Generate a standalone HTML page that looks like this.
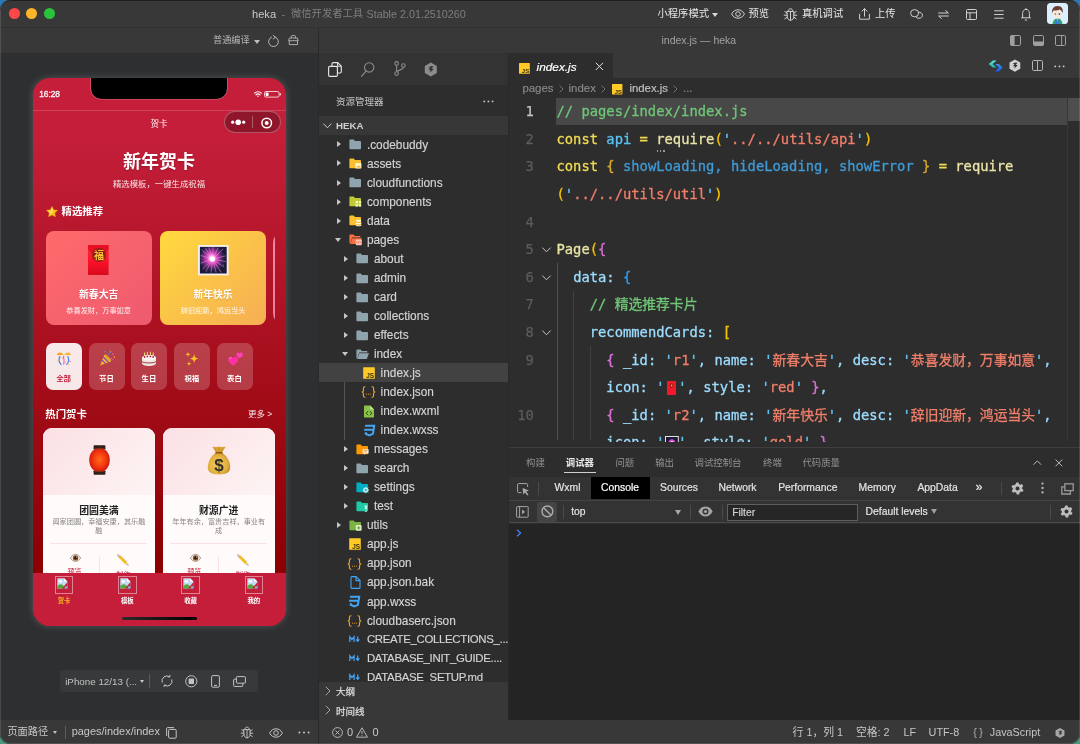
<!DOCTYPE html>
<html lang="zh-CN">
<head>
<meta charset="utf-8">
<title>heka - 微信开发者工具</title>
<style>
*{box-sizing:border-box;margin:0;padding:0}
html,body{width:1080px;height:744px;overflow:hidden}
body{background:linear-gradient(180deg,#2a7ab8 0%,#2a7ab8 30%,#4a9a7a 100%);font-family:"Liberation Sans","Noto Sans CJK SC",sans-serif;color:#ccc;font-size:12px;-webkit-font-smoothing:antialiased}
.abs{position:absolute}
#win{position:absolute;left:0;top:0;width:1080px;height:744px;background:#2e2f31;border-radius:10px;overflow:hidden;will-change:transform}
#titlebar{position:absolute;left:0;top:0;width:1080px;height:27px;background:#383838}
#tb2{position:absolute;left:0;top:28px;width:1080px;height:25px;background:#383838}
.tl{position:absolute;top:8.2px;width:11px;height:11px;border-radius:50%}
.t{position:absolute;white-space:nowrap;line-height:1}
svg{position:absolute;overflow:visible}
/* simulator */
#sim{position:absolute;left:0;top:53px;width:318px;height:667px;background:#2e2f31}
#simbar{position:absolute;left:0;top:720px;width:318px;height:24px;background:#383838}
#vsep{position:absolute;left:318px;top:28px;width:1px;height:716px;background:#2a2a2a}
/* explorer */
#exp{position:absolute;left:319px;top:53px;width:189px;height:667px;background:#2d2d2d}
/* editor */
#ed{position:absolute;left:508px;top:53px;width:572px;height:667px;background:#2d2d2d}
#status{position:absolute;left:319px;top:720px;width:761px;height:24px;background:#383838}

/* phone */
#phone{position:absolute;left:32.5px;top:25.3px;width:253px;height:547.3px;border-radius:17px;background:#c41e3a;overflow:hidden}
#phsh{position:absolute;left:32.5px;top:25.3px;width:253px;height:547.3px;border-radius:17px;box-shadow:0 0 7px 0 rgba(255,255,255,.2)}
#page{position:absolute;left:0;top:58.5px;width:253px;height:436px;background:linear-gradient(180deg,#c41e3a 0%,#8b0000 100%)}
.w{color:#fff}
.b{font-weight:bold}
.c{text-align:center}
.rc{position:absolute;top:93.8px;width:106.4px;height:94.2px;border-radius:8px}
.chip{position:absolute;top:206.3px;width:36.2px;height:46.8px;border-radius:7px;background:rgba(255,255,255,.2)}
.chip .t{left:0;width:35.8px;text-align:center;top:31.5px;font-size:7.4px;font-weight:bold;color:#fff}
.hc{position:absolute;top:291px;width:111.6px;height:160px;border-radius:9px;background:#fffbfb;overflow:hidden}
.hc .top{position:absolute;left:0;top:0;width:100%;height:67px;background:linear-gradient(135deg,#fbe0e4 0%,#fdf4f4 100%)}
.tab{position:absolute;top:494.3px;width:63.25px;height:53px}
.tab .bx{position:absolute;left:22.4px;top:3.2px;width:18.4px;height:18.4px;border:1px solid rgba(255,255,255,.45)}
.tab .t{left:0;width:63.25px;text-align:center;top:25.3px;font-size:6.4px;font-weight:bold;color:#fff}

.fn{font-size:11.85px;color:#d4d4d4;margin-top:1.6px;-webkit-text-stroke:.15px}
.bc{-webkit-text-stroke:.15px}

.cd{font-family:"DejaVu Sans Mono","Noto Sans CJK SC",monospace;font-size:13.8px;line-height:27.6px;white-space:pre;color:#d4d4d4;margin-top:.6px;-webkit-text-stroke:.3px}
.ln{font-family:"DejaVu Sans Mono",monospace;font-size:13.8px;line-height:27.6px;text-align:right;margin-top:.6px;-webkit-text-stroke:.25px}
#codeclip{position:absolute;left:0;top:0;width:572px;height:388.8px;overflow:hidden}
.pt{position:absolute;white-space:nowrap;line-height:1;font-size:9.4px;color:#929292;top:405.1px}
.dt{position:absolute;white-space:nowrap;line-height:1;font-size:10.35px;color:#e2e2e2;top:430.4px;-webkit-text-stroke:.2px}
.sb{position:absolute;white-space:nowrap;line-height:1;font-size:10.8px;color:#c6c6c6;top:6.5px}
</style>
</head>
<body>
<div id="win">
  <div id="titlebar">
    <div class="tl" style="left:9.2px;background:#fe4848"></div>
    <div class="tl" style="left:26.4px;background:#fdb426"></div>
    <div class="tl" style="left:43.7px;background:#2ac33b"></div>
    <div class="t" id="ttl" style="left:252px;top:8.8px;font-size:11.1px;color:#c9c9c9">heka</div>
    <div class="t" style="left:281.6px;top:8.8px;font-size:11px;color:#7e7e7e">-</div>
    <div class="t" id="ttl2" style="left:291px;top:9.3px;font-size:10.3px;color:#7e7e7e">微信开发者工具</div>
    <div class="t" id="ttl3" style="left:366.5px;top:8.8px;font-size:10.75px;color:#7e7e7e">Stable 2.01.2510260</div>
    <div class="t" id="mode" style="left:657.5px;top:9.4px;font-size:10.3px;color:#e6e6e6">小程序模式</div>
    <div class="abs" style="left:712px;top:12.6px;border:3px solid transparent;border-top:4px solid #d8d8d8;border-bottom:0"></div>
    <svg style="left:731px;top:9px" width="14" height="10" viewBox="0 0 14 10" fill="none" stroke="#d0d0d0" stroke-width="1"><path d="M0.6 5C2.2 2 4.4 0.8 7 0.8S11.8 2 13.4 5C11.8 8 9.6 9.2 7 9.2S2.2 8 0.6 5Z"/><circle cx="7" cy="5" r="2.3"/></svg>
    <div class="t" id="pv" style="left:748.5px;top:9.4px;font-size:10.3px;color:#e6e6e6">预览</div>
    <svg style="left:783px;top:7.5px" width="15" height="13" viewBox="0 0 15 13" fill="none" stroke="#d0d0d0" stroke-width="1" stroke-linecap="round"><path d="M5.2 3.4C5.2 1.6 6.2 0.8 7.5 0.8S9.8 1.6 9.8 3.4"/><path d="M4.2 3.4H10.8V8.6C10.8 10.6 9.4 12.2 7.5 12.2S4.2 10.6 4.2 8.6Z"/><path d="M7.5 3.4V12.2"/><path d="M4.2 5.2L1.8 3.6M4.2 7.2H1.2M4.2 9.2L1.8 10.8M10.8 5.2L13.2 3.6M10.8 7.2H13.8M10.8 9.2L13.2 10.8"/></svg>
    <div class="t" id="dbg" style="left:802px;top:9.4px;font-size:10.3px;color:#e6e6e6">真机调试</div>
    <svg style="left:858.5px;top:8px" width="11" height="12" viewBox="0 0 11 12" fill="none" stroke="#d0d0d0" stroke-width="1" stroke-linecap="round" stroke-linejoin="round"><path d="M0.6 6.2V11.2H10.4V6.2"/><path d="M5.5 8.2V0.8M2.9 3.2L5.5 0.7L8.1 3.2"/></svg>
    <div class="t" id="up" style="left:875px;top:9.4px;font-size:10.3px;color:#e6e6e6">上传</div>
    <svg style="left:909.5px;top:9px" width="13" height="10" viewBox="0 0 13 10" fill="none" stroke="#d0d0d0" stroke-width="1"><ellipse cx="4.6" cy="4.2" rx="4" ry="3.6"/><path d="M8 3.4C10.4 2.8 12.4 4.2 12.4 6.2C12.4 8 11 9.3 9 9.3C7.4 9.3 6.2 8.6 5.6 7.6"/></svg>
    <svg style="left:938px;top:9.5px" width="11" height="9" viewBox="0 0 11 9" fill="none" stroke="#d0d0d0" stroke-width="1" stroke-linecap="round" stroke-linejoin="round"><path d="M0.6 3H10.4L7.6 0.6M10.4 6H0.6L3.4 8.4"/></svg>
    <svg style="left:965.5px;top:8.5px" width="11" height="11" viewBox="0 0 11 11" fill="none" stroke="#d0d0d0" stroke-width="1"><rect x="0.5" y="0.5" width="10" height="10" rx="1"/><path d="M0.5 3.8H10.5M4 3.8V10.5"/></svg>
    <svg style="left:994px;top:9.5px" width="10" height="9" viewBox="0 0 10 9" fill="none" stroke="#d0d0d0" stroke-width="1"><path d="M0.2 0.8H9.6M0.2 4.5H9.6M0.2 8.2H9.6"/></svg>
    <svg style="left:1021px;top:7.5px" width="10" height="13" viewBox="0 0 10 13" fill="none" stroke="#d0d0d0" stroke-width="1" stroke-linecap="round"><path d="M1.6 9.6V5.4C1.6 3 3 1.4 5 1.4S8.4 3 8.4 5.4V9.6"/><path d="M0.5 9.8H9.5M4.2 12H5.8M5 0.6V1.2"/></svg>
    <div class="abs" id="avatar" style="left:1047px;top:3px;width:21px;height:21px;border-radius:3.5px;background:#dcefff;overflow:hidden">
      <svg style="left:0;top:0" width="21" height="21" viewBox="0 0 21 21"><path d="M5.5 21C5.8 17.5 7.5 15.5 10.5 15.5S15.2 17.5 15.5 21Z" fill="#2fae62"/><path d="M7.6 21L8.3 16.2L10.5 17.2L12.7 16.2L13.4 21Z" fill="#3b7fd0"/><path d="M9.8 15.5L10.5 19L11.2 15.5Z" fill="#e4b23a"/><ellipse cx="10.4" cy="10.6" rx="4.6" ry="4.9" fill="#fbe9dc"/><path d="M5.2 10.2C4.4 6 6.6 3.2 10.4 3C14.4 2.8 16.6 5.6 15.6 10.2C15 8.4 14.2 7.4 12.8 6.6C10.6 7.8 7.6 7.6 6.4 7.4C5.8 8.2 5.4 9.2 5.2 10.2Z" fill="#6b4030"/><circle cx="8.4" cy="11" r="0.9" fill="#c77a3a"/><circle cx="12.4" cy="11" r="0.9" fill="#3a6fb0"/></svg>
    </div>
  </div>
  <div class="abs" style="left:0;top:27px;width:1080px;height:1px;background:#323232"></div>
  <div id="tb2">
    <div class="t" id="cmp" style="left:213px;top:8.4px;font-size:9.2px;color:#b6b6b6">普通编译</div>
    <div class="abs" style="left:254px;top:11.8px;border:3px solid transparent;border-top:4px solid #bdbdbd;border-bottom:0"></div>
    <svg style="left:267.5px;top:7px" width="11" height="12" viewBox="0 0 11 12" fill="none" stroke="#b8b8b8" stroke-width="1" stroke-linecap="round"><path d="M7.4 2.1A4.9 4.9 0 1 1 3.6 2.1"/><path d="M5.2 0.4L7.5 2.2L5.2 4" stroke-linejoin="round" fill="none"/></svg>
    <svg style="left:288.2px;top:7.1px" width="10.8" height="10.2" viewBox="0 0 12 11" fill="none" stroke="#b8b8b8" stroke-width="1" stroke-linejoin="round"><path d="M3.6 3.2V1.4C3.6 0.9 4 0.5 4.5 0.5H7.5C8 0.5 8.4 0.9 8.4 1.4V3.2"/><path d="M1.6 3.2H10.4L11.4 6.2H0.6Z"/><path d="M1.4 6.2V10.5H10.6V6.2"/></svg>
    <div class="t" id="wt" style="left:661.5px;top:6.6px;font-size:10.5px;color:#a2a2a2">index.js — heka</div>
    <svg style="left:1010px;top:6.5px" width="11" height="11" viewBox="0 0 11 11"><rect x="0.5" y="0.5" width="10" height="10" rx="1.2" fill="none" stroke="#a0a0a0"/><path d="M0.5 1.2C0.5 0.8 0.8 0.5 1.2 0.5H4.6V10.5H1.2C0.8 10.5 0.5 10.2 0.5 9.8Z" fill="#a0a0a0"/></svg>
    <svg style="left:1032.5px;top:6.5px" width="11" height="11" viewBox="0 0 11 11"><rect x="0.5" y="0.5" width="10" height="10" rx="1.2" fill="none" stroke="#a0a0a0"/><path d="M0.5 6.4H10.5V9.8C10.5 10.2 10.2 10.5 9.8 10.5H1.2C0.8 10.5 0.5 10.2 0.5 9.8Z" fill="#a0a0a0"/></svg>
    <svg style="left:1055px;top:6.5px" width="11" height="11" viewBox="0 0 11 11"><rect x="0.5" y="0.5" width="10" height="10" rx="1.2" fill="none" stroke="#a0a0a0"/><path d="M6.6 0.5V10.5" stroke="#a0a0a0" fill="none"/></svg>
  </div>
  <div id="sim">
    <div id="phsh"></div>
    <div id="phone">
      <div class="abs" style="left:58.2px;top:0;width:136.6px;height:21.2px;background:#000;border-radius:0 0 10.5px 10.5px;box-shadow:0 0 0 .6px rgba(255,255,255,.35)"></div>
      <div class="t w" style="left:6.8px;top:12.2px;font-size:8.3px;font-weight:normal;-webkit-text-stroke:.35px;letter-spacing:-.05px;opacity:.95">16:28</div>
      <svg style="left:221.5px;top:13px" width="8" height="6" viewBox="0 0 8 6" fill="none" stroke="#fff" stroke-width="1.1" stroke-linecap="round"><path d="M0.6 2.2C2.6 0.2 5.4 0.2 7.4 2.2M2 3.8C3.2 2.6 4.8 2.6 6 3.8"/><circle cx="4" cy="5.2" r=".7" fill="#fff" stroke="none"/></svg>
      <svg style="left:231.5px;top:12.8px" width="18" height="7" viewBox="0 0 18 7"><rect x=".5" y=".5" width="14.6" height="5.6" rx="1.6" fill="none" stroke="#fff" stroke-opacity=".85" stroke-width=".9"/><rect x="1.6" y="1.6" width="3" height="3.4" rx=".8" fill="#fff"/><path d="M16 2.2C16.8 2.4 16.8 4.2 16 4.4Z" fill="#fff" stroke="#fff" stroke-width=".5"/></svg>
      <div class="abs" style="left:0;top:31.4px;width:253px;height:1px;background:rgba(255,255,255,.16)"></div>
      <div class="t w c" style="left:0;width:253px;top:41.6px;font-size:8.6px;opacity:.95">贺卡</div>
      <div class="abs" style="left:191.2px;top:33.2px;width:57.4px;height:21.8px;border-radius:10.9px;background:rgba(0,0,0,.27);border:.8px solid rgba(255,255,255,.28)"></div>
      <svg style="left:196.6px;top:39.2px" width="18" height="10" viewBox="0 0 18 10" fill="#fff"><circle cx="9.2" cy="5.2" r="2.8"/><circle cx="3.7" cy="5.2" r="1.6"/><circle cx="14.7" cy="5.2" r="1.6"/></svg>
      <div class="abs" style="left:219.8px;top:38.2px;width:.8px;height:11.4px;background:rgba(255,255,255,.3)"></div>
      <svg style="left:228.5px;top:38.3px" width="12" height="12" viewBox="0 0 12 12"><circle cx="5.7" cy="6" r="4.8" fill="none" stroke="#fff" stroke-width="1.5"/><circle cx="5.7" cy="6" r="2" fill="#fff"/></svg>
      <div class="abs" style="left:0;top:58.5px;width:253px;height:1px;background:rgba(255,255,255,.14)"></div>
      <div id="page">
        <div class="t w b c" id="h1" style="left:0;width:253px;top:16px;font-size:18px;text-shadow:0 1px 2px rgba(0,0,0,.2)">新年贺卡</div>
        <div class="t w c" id="sub" style="left:0;width:253px;top:42.8px;font-size:8.4px;opacity:.88">精选模板，一键生成祝福</div>
        <svg style="left:13px;top:69px" width="12" height="11" viewBox="0 0 12 11"><path d="M6 0.3L7.7 3.8L11.6 4.3L8.8 7L9.5 10.8L6 9L2.5 10.8L3.2 7L0.4 4.3L4.3 3.8Z" fill="#fcc21b" stroke="#e9a40e" stroke-width=".4"/><path d="M6 1.6L7.2 4.3L6 7.2L3.4 9.6L3.9 6.8L1.8 4.8L4.8 4.4Z" fill="#ffe36a" opacity=".7"/></svg>
        <div class="t w b" id="s1" style="left:29px;top:70px;font-size:10.4px">精选推荐</div>
        <div class="abs" style="left:12.8px;top:0;width:229.6px;height:200px;overflow:hidden">
          <div class="rc" style="left:.4px;background:linear-gradient(135deg,#ff6b6b 0%,#ee5a6f 100%)"></div>
          <div class="rc" style="left:114.6px;background:linear-gradient(135deg,#ffd93d 0%,#f6ad55 100%)"></div>
          <div class="rc" style="left:227.8px;border-radius:12px;background:linear-gradient(180deg,#f08aa2 0%,#ee7c96 100%)"></div>
        </div>
        <div class="t w b c" style="left:13px;width:106.3px;top:153.6px;font-size:9.8px;text-shadow:0 .5px 1px rgba(0,0,0,.15)">新春大吉</div>
        <div class="t w c" style="left:13px;width:106.3px;top:170px;font-size:7.2px;opacity:.92">恭喜发财，万事如意</div>
        <div class="t w b c" style="left:127.4px;width:106.3px;top:153.6px;font-size:9.8px;text-shadow:0 .5px 1px rgba(0,0,0,.15)">新年快乐</div>
        <div class="t w c" style="left:127.4px;width:106.3px;top:170px;font-size:7.2px;opacity:.92">辞旧迎新，鸿运当头</div>
        <!-- red envelope -->
        <svg style="left:55.8px;top:108.6px" width="21" height="30" viewBox="0 0 21 30"><defs><linearGradient id="gEnv" x1="0" y1="0" x2="0" y2="1"><stop offset="0" stop-color="#ff2a35"/><stop offset=".55" stop-color="#fb1228"/><stop offset="1" stop-color="#d80a1e"/></linearGradient></defs><rect x="0" y="0" width="20.6" height="30" rx=".6" fill="url(#gEnv)"/><path d="M0 0H20.6V4C18 9 13 10 10.3 10S2.6 9 0 4Z" fill="#e80f24"/><circle cx="11" cy="10" r="7" fill="#8a1712"/><circle cx="11" cy="10" r="6.2" fill="none" stroke="#b5391c" stroke-width=".6"/><text x="11" y="13.6" font-size="10" text-anchor="middle" fill="#f3c23a" font-family="'Liberation Sans','Noto Sans CJK SC',sans-serif" font-weight="bold">福</text></svg>
        <!-- fireworks -->
        <svg style="left:165px;top:108.4px" width="31" height="31" viewBox="0 0 31 31"><defs><radialGradient id="gFw" cx=".47" cy=".46" r=".56"><stop offset="0" stop-color="#fff"/><stop offset=".14" stop-color="#ffd6f6"/><stop offset=".3" stop-color="#f04fd0"/><stop offset=".55" stop-color="#a8369e" stop-opacity=".8"/><stop offset=".8" stop-color="#4a2a6c" stop-opacity=".5"/><stop offset="1" stop-color="#1b1a3c" stop-opacity="0"/></radialGradient><clipPath id="cFw"><rect x="1.9" y="1.9" width="26.8" height="26.6"/></clipPath></defs><rect x="0" y="0" width="30.6" height="30.4" fill="#f4f1ec"/><rect x="1.9" y="1.9" width="26.8" height="26.6" fill="#1b1a3c"/><circle cx="14.6" cy="14.2" r="13" fill="url(#gFw)" clip-path="url(#cFw)"/><g stroke="#f7a8e8" stroke-width=".55" stroke-linecap="round" opacity=".85"><path d="M14.6 14.2L4 5M14.6 14.2L25 4M14.6 14.2L27 11M14.6 14.2L26 22M14.6 14.2L18 27M14.6 14.2L8 26M14.6 14.2L3 18M14.6 14.2L11 3M14.6 14.2L20 3M14.6 14.2L3 10.5M14.6 14.2L23 27M14.6 14.2L27.5 16.5M14.6 14.2L5 23.5M14.6 14.2L15 2.6M14.6 14.2L13 27.4M14.6 14.2L7.5 3.5"/></g><g fill="#e8504a"><circle cx="6" cy="24" r=".5"/><circle cx="22" cy="25.5" r=".5"/><circle cx="25.5" cy="20" r=".5"/><circle cx="9" cy="26.4" r=".45"/></g><circle cx="14.4" cy="14" r="2.6" fill="#fff"/><rect x="1.9" y="1.9" width="26.8" height="26.6" fill="none" stroke="#f4f1ec" stroke-width=".01"/></svg>
        <!-- chips -->
        <div class="chip" style="left:13.2px;background:rgba(255,255,255,.91)"><div class="t" style="color:#c41e3a">全部</div>
          <svg style="left:10.4px;top:7.6px" width="16" height="16" viewBox="0 0 16 16" fill="none"><path d="M7.6 3.6C5.4 0.4 1.6 1 0.8 3.8C3.4 4.6 6 4.4 7.6 3.6Z" fill="#f5a623"/><path d="M8.2 3.6C10.4 0.4 14.2 1 15 3.8C12.4 4.6 9.8 4.4 8.2 3.6Z" fill="#f7b733"/><path d="M4 5.4C2.2 8.4 3.2 11.6 5.4 13.8" stroke="#3f7fdc" stroke-width="1.2"/><path d="M7.9 4.8C6.6 7.8 9.4 9.6 7.6 13.4" stroke="#ef5a8c" stroke-width="1.1"/><path d="M11.6 5.4C13.4 8.2 12.6 11.4 10.4 13.8" stroke="#4b8be6" stroke-width="1.2"/><path d="M5.8 6.4L10.2 12.4" stroke="#f3b0c4" stroke-width="1"/><circle cx="2.2" cy="9.6" r=".7" fill="#f5c542"/><circle cx="14" cy="10.4" r=".7" fill="#f06292"/><circle cx="12.8" cy="13.6" r=".6" fill="#f5c542"/></svg></div>
        <div class="chip" style="left:56px"><div class="t">节日</div>
          <svg style="left:10px;top:7.4px" width="17" height="17" viewBox="0 0 17 17" fill="none"><path d="M1 15.6L5.4 4.8L12 11.2Z" fill="#f6c233"/><path d="M3.2 10.2L6.6 13.6M4.4 7.2L9.4 12.2" stroke="#8e44ad" stroke-width="1.3"/><path d="M1 15.6L2.2 12.8L4 14.4Z" fill="#d98e1c"/><ellipse cx="8.7" cy="8" rx="1.5" ry="4.6" transform="rotate(-45 8.7 8)" fill="#e0a92a"/><path d="M8.6 6.6C8.6 4 10.2 2.6 12 2" stroke="#4a90e2" stroke-width="1"/><path d="M10.6 8.6C12.6 8.2 14.2 9.2 15.2 10.4" stroke="#e2559a" stroke-width="1"/><circle cx="14" cy="4" r="1" fill="#e2559a"/><circle cx="6" cy="1.8" r=".8" fill="#4a90e2"/><circle cx="15.4" cy="7" r=".7" fill="#f6c233"/><path d="M11 .8L12 1.8" stroke="#f6c233" stroke-width=".9"/></svg></div>
        <div class="chip" style="left:98.6px"><div class="t">生日</div>
          <svg style="left:10.4px;top:7.6px" width="16" height="16" viewBox="0 0 16 16" fill="none"><path d="M3.6 1.4V5M6.4 .8V5M9.4 .8V5M12.2 1.4V5" stroke="#f2d16b" stroke-width="1.1"/><ellipse cx="8" cy="7" rx="7" ry="3" fill="#fbf5ef"/><path d="M1 7V12C1 13.8 4 15 8 15S15 13.8 15 12V7Z" fill="#efe6de"/><ellipse cx="8" cy="6.8" rx="6.8" ry="2.8" fill="#fffaf5"/><path d="M1 10.6C3 12.4 13 12.4 15 10.6" stroke="#8a2a3a" stroke-width=".9"/><circle cx="3.6" cy="6" r=".9" fill="#b3223a"/><circle cx="6.4" cy="5.4" r=".9" fill="#b3223a"/><circle cx="9.4" cy="5.4" r=".9" fill="#b3223a"/><circle cx="12.2" cy="6" r=".9" fill="#b3223a"/></svg></div>
        <div class="chip" style="left:141.4px"><div class="t">祝福</div>
          <svg style="left:10.4px;top:7.6px" width="16" height="16" viewBox="0 0 16 16"><path d="M10.2 2.4C10.6 6 11.4 6.8 15 7.6C11.4 8.4 10.6 9.2 10.2 12.8C9.8 9.2 9 8.4 5.4 7.6C9 6.8 9.8 6 10.2 2.4Z" fill="#fcc21b"/><path d="M4 .6C4.2 2.6 4.6 3 6.6 3.4C4.6 3.8 4.2 4.2 4 6.2C3.8 4.2 3.4 3.8 1.4 3.4C3.4 3 3.8 2.6 4 .6Z" fill="#fcc21b"/><path d="M5 10C5.2 12 5.6 12.4 7.6 12.8C5.6 13.2 5.2 13.6 5 15.6C4.8 13.6 4.4 13.2 2.4 12.8C4.4 12.4 4.8 12 5 10Z" fill="#fcc21b"/></svg></div>
        <div class="chip" style="left:184px"><div class="t">表白</div>
          <svg style="left:10px;top:7.6px" width="17" height="16" viewBox="0 0 17 16"><path d="M12.6 2.6C13.2 1 15.8 1.2 15.8 3.4C15.8 5 14 6.2 12.6 7.2C11.2 6.2 9.4 5 9.4 3.4C9.4 1.2 12 1 12.6 2.6Z" fill="#ff3fb4"/><path d="M6.2 7.4C7.2 4.8 11.2 5.2 11.2 8.6C11.2 11.2 8.4 13.2 6.2 14.8C4 13.2 1.2 11.2 1.2 8.6C1.2 5.2 5.2 4.8 6.2 7.4Z" fill="#ff2fa6"/><path d="M2.6 8C2.8 6.8 3.8 6.4 4.6 6.6" stroke="#ff9ad8" stroke-width=".7" fill="none"/></svg></div>
        <div class="t w b" id="s2" style="left:12.8px;top:273px;font-size:10.4px">热门贺卡</div>
        <div class="t w" id="more" style="left:215.5px;top:273.6px;font-size:8.5px;opacity:.9">更多 &gt;</div>
        <!-- hot cards -->
        <div class="hc" id="hc1" style="left:10.6px"><div class="top"></div>
          <svg style="left:46px;top:17px" width="21" height="30" viewBox="0 0 21 30"><defs><radialGradient id="gLan" cx=".5" cy=".48" r=".55"><stop offset="0" stop-color="#ff6a1a"/><stop offset=".55" stop-color="#f43a10"/><stop offset="1" stop-color="#c8160a"/></radialGradient></defs><rect x="4.6" y=".2" width="11.8" height="4.4" rx=".8" fill="#2b2119"/><rect x="4.6" y="25.4" width="11.8" height="4.4" rx=".8" fill="#2b2119"/><ellipse cx="10.5" cy="15" rx="10.3" ry="12.2" fill="url(#gLan)"/><path d="M4.6 3.6H16.4M4.6 26.4H16.4" stroke="#4a3a28" stroke-width=".6"/></svg>
          <div class="t b c" style="left:0;width:111.6px;top:77.8px;font-size:9.9px;color:#222">团圆美满</div>
          <div class="t c" style="left:0;width:111.6px;top:91.2px;font-size:7.15px;color:#8a8686">阖家团圆，幸福安康，其乐融</div>
          <div class="t c" style="left:0;width:111.6px;top:100.6px;font-size:7.15px;color:#8a8686">融</div>
          <div class="abs" style="left:7.4px;top:115.2px;width:96.8px;height:1px;background:#fbe0e4"></div>
          <div class="abs" style="left:55.6px;top:129.5px;width:1px;height:20px;background:#fbe0e4"></div>
          <svg style="left:27px;top:126.5px" width="11" height="8" viewBox="0 0 11 8"><path d="M.3 4C2 1.2 3.6.4 5.5.4S9 1.2 10.7 4C9 6.6 7.4 7.4 5.5 7.4S2 6.6.3 4Z" fill="#f4ece6" stroke="#7a6a5e" stroke-width=".6"/><circle cx="5.6" cy="3.9" r="2.7" fill="#8a5322"/><circle cx="5.6" cy="3.9" r="1.3" fill="#1e140e"/><circle cx="6.4" cy="3.1" r=".5" fill="#fff"/></svg>
          <svg style="left:74.4px;top:126px" width="12" height="12" viewBox="0 0 12 12"><path d="M2.2.8L10.2 8.6L8.4 10.4L.6 2.4Z" fill="#f5c02a"/><path d="M3.4 2L9.3 7.7" stroke="#e09a16" stroke-width=".8"/><path d="M2.2.8L.6 2.4L.2.2Z" fill="#e98a9a"/><path d="M1.6 1.3L2.9 2.6L1.9 3.6L.8 2.6Z" fill="#b8b8c0"/><path d="M10.2 8.6L11.6 11.6L8.4 10.4Z" fill="#f2d2a8"/><path d="M11 10.2L11.6 11.6L10.2 11.1Z" fill="#3a3a3a"/></svg>
          <div class="t c" style="left:7.4px;width:48.2px;top:140.4px;font-size:7.2px;color:#c41e3a">预览</div>
          <div class="t c" style="left:56px;width:48.2px;top:143.4px;font-size:7.2px;color:#c41e3a">制作</div>
        </div>
        <div class="hc" id="hc2" style="left:130.4px;width:112.4px"><div class="top"></div>
          <svg style="left:44px;top:18.4px" width="24" height="29" viewBox="0 0 24 29"><defs><radialGradient id="gBag" cx=".45" cy=".55" r=".6"><stop offset="0" stop-color="#f3cc5e"/><stop offset=".7" stop-color="#e2b040"/><stop offset="1" stop-color="#c08a22"/></radialGradient></defs><path d="M5.4 1.2C7.6 -.2 9.6 1.8 12 .6C14.4 1.8 16.4 -.2 18.6 1.2C17 3.4 15.6 5.2 15 7H9C8.4 5.2 7 3.4 5.4 1.2Z" fill="#d9a534"/><path d="M8 2.6L10.4 6.6M12 1.8V6.6M16 2.6L13.6 6.6" stroke="#b07c18" stroke-width=".6" fill="none"/><path d="M9.2 6.6H14.8C20 10 23.4 16.4 23.2 21.6C23 26.6 19.4 28.4 12 28.4S1 26.6.8 21.6C.6 16.4 4 10 9.2 6.6Z" fill="url(#gBag)"/><path d="M8.4 6.8H15.6" stroke="#8a5a14" stroke-width="1.5"/><text x="12" y="24.6" font-size="17" font-weight="bold" text-anchor="middle" fill="#33302c" font-family="'Liberation Sans',sans-serif">$</text></svg>
          <div class="t b c" style="left:0;width:111.6px;top:77.8px;font-size:9.9px;color:#222">财源广进</div>
          <div class="t c" style="left:0;width:111.6px;top:91.2px;font-size:7.15px;color:#8a8686">年年有余，富贵吉祥，事业有</div>
          <div class="t c" style="left:0;width:111.6px;top:100.6px;font-size:7.15px;color:#8a8686">成</div>
          <div class="abs" style="left:7.4px;top:115.2px;width:96.8px;height:1px;background:#fbe0e4"></div>
          <div class="abs" style="left:55.6px;top:129.5px;width:1px;height:20px;background:#fbe0e4"></div>
          <svg style="left:27px;top:126.5px" width="11" height="8" viewBox="0 0 11 8"><path d="M.3 4C2 1.2 3.6.4 5.5.4S9 1.2 10.7 4C9 6.6 7.4 7.4 5.5 7.4S2 6.6.3 4Z" fill="#f4ece6" stroke="#7a6a5e" stroke-width=".6"/><circle cx="5.6" cy="3.9" r="2.7" fill="#8a5322"/><circle cx="5.6" cy="3.9" r="1.3" fill="#1e140e"/><circle cx="6.4" cy="3.1" r=".5" fill="#fff"/></svg>
          <svg style="left:74.4px;top:126px" width="12" height="12" viewBox="0 0 12 12"><path d="M2.2.8L10.2 8.6L8.4 10.4L.6 2.4Z" fill="#f5c02a"/><path d="M3.4 2L9.3 7.7" stroke="#e09a16" stroke-width=".8"/><path d="M2.2.8L.6 2.4L.2.2Z" fill="#e98a9a"/><path d="M1.6 1.3L2.9 2.6L1.9 3.6L.8 2.6Z" fill="#b8b8c0"/><path d="M10.2 8.6L11.6 11.6L8.4 10.4Z" fill="#f2d2a8"/><path d="M11 10.2L11.6 11.6L10.2 11.1Z" fill="#3a3a3a"/></svg>
          <div class="t c" style="left:7.4px;width:48.2px;top:140.4px;font-size:7.2px;color:#c41e3a">预览</div>
          <div class="t c" style="left:56px;width:48.2px;top:143.4px;font-size:7.2px;color:#c41e3a">制作</div>
        </div>
      </div>
      <!-- tab bar -->
      <div class="abs" style="left:0;top:494.3px;width:253px;height:53px;background:#c41e3a"></div>
      <div class="tab" style="left:0"><div class="bx"><svg style="left:1px;top:1px" width="11" height="11" viewBox="0 0 11 11"><path d="M.3.3H7L10.4 3.6V10.6H.3Z" fill="#c4d9f4"/><path d="M7 .3V3.6H10.4Z" fill="#fff"/><path d="M.3 8.6C2 6 4.4 5.8 6 7.2L9 10.6H.3Z" fill="#53a83c"/><ellipse cx="3.4" cy="3.4" rx="2" ry="1.1" fill="#fff"/><path d="M10.4 4.2L5 10.6H10.4Z" fill="#c41e3a"/><path d="M8.2 8.2L10.4 8V10.6H7.6Z" fill="#7fb0d8"/></svg></div><div class="t" style="color:#f5b324">贺卡</div></div>
      <div class="tab" style="left:63.25px"><div class="bx"><svg style="left:1px;top:1px" width="11" height="11" viewBox="0 0 11 11"><path d="M.3.3H7L10.4 3.6V10.6H.3Z" fill="#c4d9f4"/><path d="M7 .3V3.6H10.4Z" fill="#fff"/><path d="M.3 8.6C2 6 4.4 5.8 6 7.2L9 10.6H.3Z" fill="#53a83c"/><ellipse cx="3.4" cy="3.4" rx="2" ry="1.1" fill="#fff"/><path d="M10.4 4.2L5 10.6H10.4Z" fill="#c41e3a"/><path d="M8.2 8.2L10.4 8V10.6H7.6Z" fill="#7fb0d8"/></svg></div><div class="t">模板</div></div>
      <div class="tab" style="left:126.5px"><div class="bx"><svg style="left:1px;top:1px" width="11" height="11" viewBox="0 0 11 11"><path d="M.3.3H7L10.4 3.6V10.6H.3Z" fill="#c4d9f4"/><path d="M7 .3V3.6H10.4Z" fill="#fff"/><path d="M.3 8.6C2 6 4.4 5.8 6 7.2L9 10.6H.3Z" fill="#53a83c"/><ellipse cx="3.4" cy="3.4" rx="2" ry="1.1" fill="#fff"/><path d="M10.4 4.2L5 10.6H10.4Z" fill="#c41e3a"/><path d="M8.2 8.2L10.4 8V10.6H7.6Z" fill="#7fb0d8"/></svg></div><div class="t">收藏</div></div>
      <div class="tab" style="left:189.75px"><div class="bx"><svg style="left:1px;top:1px" width="11" height="11" viewBox="0 0 11 11"><path d="M.3.3H7L10.4 3.6V10.6H.3Z" fill="#c4d9f4"/><path d="M7 .3V3.6H10.4Z" fill="#fff"/><path d="M.3 8.6C2 6 4.4 5.8 6 7.2L9 10.6H.3Z" fill="#53a83c"/><ellipse cx="3.4" cy="3.4" rx="2" ry="1.1" fill="#fff"/><path d="M10.4 4.2L5 10.6H10.4Z" fill="#c41e3a"/><path d="M8.2 8.2L10.4 8V10.6H7.6Z" fill="#7fb0d8"/></svg></div><div class="t">我的</div></div>
      <div class="abs" style="left:89.3px;top:538.4px;width:74.8px;height:3.6px;border-radius:1.8px;background:linear-gradient(90deg,#2c2c2c,#000)"></div>
    </div>
    <div class="abs" style="left:60px;top:616.8px;width:198.4px;height:22px;border-radius:3px;background:#38393a"></div>
    <div class="t" id="dev" style="left:65.2px;top:623.6px;font-size:9.8px;color:#c2c2c2">iPhone 12/13 (...</div>
    <div class="abs" style="left:139.6px;top:626.6px;border:2.4px solid transparent;border-top:3.6px solid #c8c8c8;border-bottom:0"></div>
    <div class="abs" style="left:148.5px;top:621.4px;width:1px;height:13.6px;background:#5a5a5a"></div>
    <svg style="left:161px;top:622.4px" width="12" height="12" viewBox="0 0 12 12" fill="none" stroke="#c4c4c4" stroke-width="1" stroke-linecap="round"><path d="M1.1 7.2A5 5 0 0 1 8.6 1.7M10.9 4.8A5 5 0 0 1 3.4 10.3"/><path d="M8.9.3L8.8 1.9L7.2 1.8M3.1 11.7L3.2 10.1L4.8 10.2" stroke-linejoin="round" stroke-width=".9"/></svg>
    <svg style="left:185px;top:622.4px" width="13" height="13" viewBox="0 0 13 13"><circle cx="6.3" cy="6.3" r="5.6" fill="none" stroke="#c4c4c4" stroke-width="1"/><rect x="3.6" y="3.6" width="5.4" height="5.4" rx=".8" fill="#c4c4c4"/></svg>
    <svg style="left:210.6px;top:622px" width="9" height="13" viewBox="0 0 9 13" fill="none" stroke="#c4c4c4" stroke-width="1"><rect x=".6" y=".6" width="7.8" height="11.6" rx="1.2"/><path d="M3 10.4H6"/></svg>
    <svg style="left:232.6px;top:623px" width="13" height="11" viewBox="0 0 13 11" fill="none" stroke="#c4c4c4" stroke-width="1"><rect x="3.4" y=".6" width="9" height="6.6" rx=".8"/><path d="M3.4 3.2H1.4C.9 3.2.6 3.5.6 4V9.6C.6 10.1.9 10.4 1.4 10.4H9C9.5 10.4 9.8 10.1 9.8 9.6V7.2"/></svg>
  </div>
  <div id="simbar">
    <div class="t" id="pp" style="left:7.4px;top:7px;font-size:10.2px;color:#c8c8c8">页面路径</div>
    <div class="abs" style="left:52.6px;top:10.8px;border:2.8px solid transparent;border-top:3.8px solid #c0c0c0;border-bottom:0"></div>
    <div class="abs" style="left:64.6px;top:6px;width:1px;height:12.6px;background:#5c5c5c"></div>
    <div class="t" id="ppath" style="left:71.7px;top:6.2px;font-size:10.95px;color:#c8c8c8">pages/index/index</div>
    <svg style="left:166px;top:6.6px" width="11" height="12" viewBox="0 0 11 12" fill="none" stroke="#c4c4c4" stroke-width="1"><rect x="2.6" y="2.4" width="7.6" height="8.8" rx="1"/><path d="M.6 9V1.6C.6 1 1 .6 1.6.6H8"/></svg>
    <svg style="left:240.4px;top:5.8px" width="14" height="13" viewBox="0 0 15 13" fill="none" stroke="#c4c4c4" stroke-width="1" stroke-linecap="round"><path d="M5.2 3.4C5.2 1.6 6.2.8 7.5.8S9.8 1.6 9.8 3.4"/><path d="M4.2 3.4H10.8V8.6C10.8 10.6 9.4 12.2 7.5 12.2S4.2 10.6 4.2 8.6Z"/><path d="M7.5 3.4V12.2"/><path d="M4.2 5.2L1.8 3.6M4.2 7.2H1.2M4.2 9.2L1.8 10.8M10.8 5.2L13.2 3.6M10.8 7.2H13.8M10.8 9.2L13.2 10.8"/></svg>
    <svg style="left:269.4px;top:7.6px" width="14" height="10" viewBox="0 0 14 10" fill="none" stroke="#c4c4c4" stroke-width="1"><path d="M.6 5C2.2 2 4.4.8 7 .8S11.8 2 13.4 5C11.8 8 9.6 9.2 7 9.2S2.2 8 .6 5Z"/><circle cx="7" cy="5" r="2.3"/></svg>
    <svg style="left:298.4px;top:11.4px" width="12" height="3" viewBox="0 0 12 3" fill="#c4c4c4"><circle cx="1.4" cy="1.4" r="1"/><circle cx="6" cy="1.4" r="1"/><circle cx="10.6" cy="1.4" r="1"/></svg>
  </div>
  <div id="exp">
    <div class="abs" style="left:0;top:0;width:189px;height:32.4px;background:#333"></div>
    <!-- activity icons -->
    <svg style="left:9px;top:8.6px" width="14" height="15" viewBox="0 0 14 15" fill="none" stroke="#e4e4e4" stroke-width="1.15" stroke-linejoin="round"><path d="M4 4V1.8C4 1.1 4.5.6 5.2.6H9.8L13.3 4.1V9.8C13.3 10.5 12.8 11 12.1 11H9.6"/><path d="M9.6.8V4.2H13.1"/><path d="M1.8 4.4H8.2C8.9 4.4 9.4 4.9 9.4 5.6V13.2C9.4 13.9 8.9 14.4 8.2 14.4H1.8C1.1 14.4.6 13.9.6 13.2V5.6C.6 4.9 1.1 4.4 1.8 4.4Z"/></svg>
    <svg style="left:42px;top:8.6px" width="14" height="15" viewBox="0 0 14 15" fill="none" stroke="#8c8c8c" stroke-width="1.1"><circle cx="8.2" cy="5.4" r="4.7"/><path d="M5 9.2L.5 14.4" stroke-linecap="round"/></svg>
    <svg style="left:75.4px;top:8.4px" width="12" height="15" viewBox="0 0 12 15" fill="none" stroke="#8c8c8c" stroke-width="1.1"><circle cx="2.6" cy="2.4" r="1.8"/><circle cx="2.6" cy="12.6" r="1.8"/><circle cx="9.4" cy="4.6" r="1.8"/><path d="M2.6 4.2V10.8M9.4 6.4C9.4 8.6 6 8.2 2.8 10.6"/></svg>
    <svg style="left:105.4px;top:8.6px" width="14" height="15" viewBox="0 0 14 15"><path d="M6.8.4L12.8 3.9V10.9L6.8 14.4L.8 10.9V3.9Z" fill="#8c8c8c"/><path d="M4.2 5.6L6.2 4.2H9.6L7.4 6.8H9.8L7.6 9.2L5.4 10.6L7 8H4.4L6.4 5.6Z" fill="#333"/></svg>
    <div class="t" id="exh" style="left:17px;top:43.6px;font-size:9.5px;color:#c6c6c6">资源管理器</div>
    <svg style="left:163.5px;top:47px" width="11" height="3" viewBox="0 0 11 3" fill="#c4c4c4"><circle cx="1.2" cy="1.4" r=".95"/><circle cx="5.4" cy="1.4" r=".95"/><circle cx="9.6" cy="1.4" r=".95"/></svg>
    <div class="abs" style="left:0;top:63px;width:189px;height:19px;background:#373737"></div>
    <svg style="left:3.6px;top:70.4px" width="9" height="6" viewBox="0 0 9 6" fill="none" stroke="#c8c8c8" stroke-width="1"><path d="M.4.6L4.4 4.8L8.4.6"/></svg>
    <div class="t b" id="heka" style="left:16.9px;top:68.2px;font-size:9.7px;color:#cfcfcf;letter-spacing:.05px">HEKA</div>
    <div class="abs" style="left:24.5px;top:311px;width:1px;height:76px;background:#555"></div>
    <div class="abs" style="left:17.7px;top:88.4px;border:3.2px solid transparent;border-left:4.4px solid #c5c5c5;border-right:0"></div>
    <svg style="left:29.6px;top:86.2px" width="14" height="12" viewBox="0 0 14 12"><path d="M.4 1.5C.4.9.9.5 1.4.5H4.7L6 2H11C11.6 2 12 2.4 12 3V9.2C12 9.8 11.6 10.2 11 10.2H1.4C.9 10.2.4 9.8.4 9.2Z" fill="#90a4ae"/></svg>
    <div class="t fn" style="left:47.9px;top:85.0px">.codebuddy</div>
    <div class="abs" style="left:17.7px;top:107.4px;border:3.2px solid transparent;border-left:4.4px solid #c5c5c5;border-right:0"></div>
    <svg style="left:29.6px;top:105.2px" width="14" height="12" viewBox="0 0 14 12"><path d="M.4 1.5C.4.9.9.5 1.4.5H4.7L6 2H11C11.6 2 12 2.4 12 3V9.2C12 9.8 11.6 10.2 11 10.2H1.4C.9 10.2.4 9.8.4 9.2Z" fill="#fbc02d"/><rect x="6.4" y="5" width="6" height="5.6" rx=".8" fill="#fff3c4"/><path d="M7.4 9.4L9 7.4L10 8.6L10.8 7.8L11.6 9.4Z" fill="#f9a825"/></svg>
    <div class="t fn" style="left:47.9px;top:104.0px">assets</div>
    <div class="abs" style="left:17.7px;top:126.5px;border:3.2px solid transparent;border-left:4.4px solid #c5c5c5;border-right:0"></div>
    <svg style="left:29.6px;top:124.3px" width="14" height="12" viewBox="0 0 14 12"><path d="M.4 1.5C.4.9.9.5 1.4.5H4.7L6 2H11C11.6 2 12 2.4 12 3V9.2C12 9.8 11.6 10.2 11 10.2H1.4C.9 10.2.4 9.8.4 9.2Z" fill="#90a4ae"/></svg>
    <div class="t fn" style="left:47.9px;top:123.1px">cloudfunctions</div>
    <div class="abs" style="left:17.7px;top:145.5px;border:3.2px solid transparent;border-left:4.4px solid #c5c5c5;border-right:0"></div>
    <svg style="left:29.6px;top:143.3px" width="14" height="12" viewBox="0 0 14 12"><path d="M.4 1.5C.4.9.9.5 1.4.5H4.7L6 2H11C11.6 2 12 2.4 12 3V9.2C12 9.8 11.6 10.2 11 10.2H1.4C.9 10.2.4 9.8.4 9.2Z" fill="#c0ca33"/><rect x="6.6" y="5" width="2.4" height="2.4" fill="#f0f4c3"/><rect x="9.8" y="5" width="2.4" height="2.4" fill="#f0f4c3"/><rect x="6.6" y="8.2" width="2.4" height="2.4" fill="#f0f4c3"/><rect x="9.8" y="8.2" width="2.4" height="2.4" fill="#f0f4c3"/></svg>
    <div class="t fn" style="left:47.9px;top:142.1px">components</div>
    <div class="abs" style="left:17.7px;top:164.6px;border:3.2px solid transparent;border-left:4.4px solid #c5c5c5;border-right:0"></div>
    <svg style="left:29.6px;top:162.4px" width="14" height="12" viewBox="0 0 14 12"><path d="M.4 1.5C.4.9.9.5 1.4.5H4.7L6 2H11C11.6 2 12 2.4 12 3V9.2C12 9.8 11.6 10.2 11 10.2H1.4C.9 10.2.4 9.8.4 9.2Z" fill="#fbc02d"/><ellipse cx="9.6" cy="5.8" rx="2.8" ry="1.1" fill="#fff8e1"/><path d="M6.8 7C6.8 8.4 12.4 8.4 12.4 7V8.2C12.4 9.6 6.8 9.6 6.8 8.2Z" fill="#fff8e1"/><path d="M6.8 9.2C6.8 10.6 12.4 10.6 12.4 9.2V10.2C12.4 11.6 6.8 11.6 6.8 10.2Z" fill="#fff8e1"/></svg>
    <div class="t fn" style="left:47.9px;top:161.2px">data</div>
    <div class="abs" style="left:16.3px;top:185.0px;border:3.2px solid transparent;border-top:4.4px solid #c5c5c5;border-bottom:0"></div>
    <svg style="left:29.6px;top:181.4px" width="14" height="12" viewBox="0 0 14 12"><path d="M.4 1.4C.4.9.8.5 1.3.5H4.6L5.8 1.9H10.6C11.1 1.9 11.5 2.3 11.5 2.8V3.6H3.2L1.2 9.4H.4Z" fill="#ff7043"/><path d="M3.3 4.2H13L10.8 10H1.2Z" fill="#ff7043"/><rect x="6.8" y="5.4" width="6" height="5.8" rx="1" fill="#ffccbc"/><path d="M8.2 7.2L7.6 8.3L8.2 9.4M11.4 7.2L12 8.3L11.4 9.4M10.2 6.8L9.4 9.8" stroke="#e64a19" stroke-width=".6" fill="none"/></svg>
    <div class="t fn" style="left:47.9px;top:180.2px">pages</div>
    <div class="abs" style="left:24.7px;top:202.6px;border:3.2px solid transparent;border-left:4.4px solid #c5c5c5;border-right:0"></div>
    <svg style="left:36.8px;top:200.4px" width="14" height="12" viewBox="0 0 14 12"><path d="M.4 1.5C.4.9.9.5 1.4.5H4.7L6 2H11C11.6 2 12 2.4 12 3V9.2C12 9.8 11.6 10.2 11 10.2H1.4C.9 10.2.4 9.8.4 9.2Z" fill="#90a4ae"/></svg>
    <div class="t fn" style="left:54.9px;top:199.2px">about</div>
    <div class="abs" style="left:24.7px;top:221.7px;border:3.2px solid transparent;border-left:4.4px solid #c5c5c5;border-right:0"></div>
    <svg style="left:36.8px;top:219.5px" width="14" height="12" viewBox="0 0 14 12"><path d="M.4 1.5C.4.9.9.5 1.4.5H4.7L6 2H11C11.6 2 12 2.4 12 3V9.2C12 9.8 11.6 10.2 11 10.2H1.4C.9 10.2.4 9.8.4 9.2Z" fill="#90a4ae"/></svg>
    <div class="t fn" style="left:54.9px;top:218.3px">admin</div>
    <div class="abs" style="left:24.7px;top:240.7px;border:3.2px solid transparent;border-left:4.4px solid #c5c5c5;border-right:0"></div>
    <svg style="left:36.8px;top:238.5px" width="14" height="12" viewBox="0 0 14 12"><path d="M.4 1.5C.4.9.9.5 1.4.5H4.7L6 2H11C11.6 2 12 2.4 12 3V9.2C12 9.8 11.6 10.2 11 10.2H1.4C.9 10.2.4 9.8.4 9.2Z" fill="#90a4ae"/></svg>
    <div class="t fn" style="left:54.9px;top:237.3px">card</div>
    <div class="abs" style="left:24.7px;top:259.8px;border:3.2px solid transparent;border-left:4.4px solid #c5c5c5;border-right:0"></div>
    <svg style="left:36.8px;top:257.6px" width="14" height="12" viewBox="0 0 14 12"><path d="M.4 1.5C.4.9.9.5 1.4.5H4.7L6 2H11C11.6 2 12 2.4 12 3V9.2C12 9.8 11.6 10.2 11 10.2H1.4C.9 10.2.4 9.8.4 9.2Z" fill="#90a4ae"/></svg>
    <div class="t fn" style="left:54.9px;top:256.4px">collections</div>
    <div class="abs" style="left:24.7px;top:278.8px;border:3.2px solid transparent;border-left:4.4px solid #c5c5c5;border-right:0"></div>
    <svg style="left:36.8px;top:276.6px" width="14" height="12" viewBox="0 0 14 12"><path d="M.4 1.5C.4.9.9.5 1.4.5H4.7L6 2H11C11.6 2 12 2.4 12 3V9.2C12 9.8 11.6 10.2 11 10.2H1.4C.9 10.2.4 9.8.4 9.2Z" fill="#90a4ae"/></svg>
    <div class="t fn" style="left:54.9px;top:275.4px">effects</div>
    <div class="abs" style="left:23.3px;top:299.2px;border:3.2px solid transparent;border-top:4.4px solid #c5c5c5;border-bottom:0"></div>
    <svg style="left:36.8px;top:295.6px" width="14" height="12" viewBox="0 0 14 12"><path d="M.4 1.4C.4.9.8.5 1.3.5H4.6L5.8 1.9H10.6C11.1 1.9 11.5 2.3 11.5 2.8V3.6H3.2L1.2 9.4H.4Z" fill="#90a4ae"/><path d="M3.3 4.2H13L10.8 10H1.2Z" fill="#90a4ae"/></svg>
    <div class="t fn" style="left:54.9px;top:294.4px">index</div>
    <div class="abs" style="left:0;top:309.8px;width:189px;height:19px;background:#424242"></div>
    <svg style="left:44.4px;top:314.1px" width="12" height="12" viewBox="0 0 12 12"><rect x=".2" y=".2" width="11.6" height="11.6" rx=".6" fill="#ffca28"/><text x="11.1" y="10.8" font-size="6.4" font-weight="bold" text-anchor="end" fill="#3a2e05" font-family="'Liberation Sans',sans-serif">JS</text></svg>
    <div class="t fn" style="left:61.6px;top:313.5px">index.js</div>
    <svg style="left:42.4px;top:333.1px" width="15" height="12" viewBox="0 0 15 12" fill="none" stroke="#f9a825" stroke-width="1.1" stroke-linecap="round"><path d="M4 .8C2.6.8 2.4 1.4 2.4 2.6V4.4C2.4 5.4 1.8 5.9.8 6C1.8 6.1 2.4 6.6 2.4 7.6V9.4C2.4 10.6 2.6 11.2 4 11.2"/><path d="M11 .8C12.4.8 12.6 1.4 12.6 2.6V4.4C12.6 5.4 13.2 5.9 14.2 6C13.2 6.1 12.6 6.6 12.6 7.6V9.4C12.6 10.6 12.4 11.2 11 11.2"/><path d="M5.4 8.2H5.5M7.5 8.2H7.6M9.6 8.2H9.7" stroke-width="1"/></svg>
    <div class="t fn" style="left:61.6px;top:332.5px">index.json</div>
    <svg style="left:44.4px;top:351.6px" width="12" height="13" viewBox="0 0 12 13"><path d="M2 .6H7.4L11 4.2V11.4C11 12 10.6 12.4 10 12.4H2C1.4 12.4 1 12 1 11.4V1.6C1 1 1.4.6 2 .6Z" fill="#8bc34a"/><path d="M7.2.8V4.4H10.8Z" fill="#c5e1a5"/><path d="M4.8 6.4L3.2 8.2L4.8 10M7.2 6.4L8.8 8.2L7.2 10" stroke="#1b3a0a" stroke-width=".9" fill="none" stroke-linecap="round" stroke-linejoin="round"/></svg>
    <div class="t fn" style="left:61.6px;top:351.6px">index.wxml</div>
    <svg style="left:43.6px;top:370.6px" width="13" height="13" viewBox="0 0 13 13"><path d="M2.2.8H12.4L10.8 10.6L6.4 12.4L1.6 10.6L1.9 8.2H4L3.9 9.2L6.4 10.2L9 9.2L9.4 6.8H1L1.4 4.8H9.8L10.1 2.8H1.8Z" fill="#42a5f5"/></svg>
    <div class="t fn" style="left:61.6px;top:370.6px">index.wxss</div>
    <div class="abs" style="left:24.7px;top:393.0px;border:3.2px solid transparent;border-left:4.4px solid #c5c5c5;border-right:0"></div>
    <svg style="left:36.8px;top:390.8px" width="14" height="12" viewBox="0 0 14 12"><path d="M.4 1.5C.4.9.9.5 1.4.5H4.7L6 2H11C11.6 2 12 2.4 12 3V9.2C12 9.8 11.6 10.2 11 10.2H1.4C.9 10.2.4 9.8.4 9.2Z" fill="#ff9800"/><path d="M6.6 5.2H12.6V9.4H9.4L8 10.8V9.4H6.6Z" fill="#fff3e0"/><path d="M7.6 6.6H11.6M7.6 8H10.6" stroke="#ef6c00" stroke-width=".6"/></svg>
    <div class="t fn" style="left:54.9px;top:389.6px">messages</div>
    <div class="abs" style="left:24.7px;top:412.1px;border:3.2px solid transparent;border-left:4.4px solid #c5c5c5;border-right:0"></div>
    <svg style="left:36.8px;top:409.9px" width="14" height="12" viewBox="0 0 14 12"><path d="M.4 1.5C.4.9.9.5 1.4.5H4.7L6 2H11C11.6 2 12 2.4 12 3V9.2C12 9.8 11.6 10.2 11 10.2H1.4C.9 10.2.4 9.8.4 9.2Z" fill="#90a4ae"/></svg>
    <div class="t fn" style="left:54.9px;top:408.7px">search</div>
    <div class="abs" style="left:24.7px;top:431.1px;border:3.2px solid transparent;border-left:4.4px solid #c5c5c5;border-right:0"></div>
    <svg style="left:36.8px;top:428.9px" width="14" height="12" viewBox="0 0 14 12"><path d="M.4 1.5C.4.9.9.5 1.4.5H4.7L6 2H11C11.6 2 12 2.4 12 3V9.2C12 9.8 11.6 10.2 11 10.2H1.4C.9 10.2.4 9.8.4 9.2Z" fill="#00acc1"/><circle cx="9.8" cy="8" r="2.6" fill="#b2ebf2"/><circle cx="9.8" cy="8" r="1" fill="#00acc1"/><path d="M9.8 4.8V11.2M6.6 8H13M7.5 5.7L12.1 10.3M12.1 5.7L7.5 10.3" stroke="#b2ebf2" stroke-width="1"/><circle cx="9.8" cy="8" r=".9" fill="#00acc1"/></svg>
    <div class="t fn" style="left:54.9px;top:427.7px">settings</div>
    <div class="abs" style="left:24.7px;top:450.2px;border:3.2px solid transparent;border-left:4.4px solid #c5c5c5;border-right:0"></div>
    <svg style="left:36.8px;top:448.0px" width="14" height="12" viewBox="0 0 14 12"><path d="M.4 1.5C.4.9.9.5 1.4.5H4.7L6 2H11C11.6 2 12 2.4 12 3V9.2C12 9.8 11.6 10.2 11 10.2H1.4C.9 10.2.4 9.8.4 9.2Z" fill="#1ec9a4"/><path d="M8.4 4.6H11.4V5.4H11V9.8C11 10.6 10.4 11.2 9.9 11.2S8.8 10.6 8.8 9.8V5.4H8.4Z" fill="#b9f6e4"/><path d="M9.3 8H10.5V9.8C10.5 10.3 10.2 10.6 9.9 10.6S9.3 10.3 9.3 9.8Z" fill="#00bfa5"/></svg>
    <div class="t fn" style="left:54.9px;top:446.8px">test</div>
    <div class="abs" style="left:17.7px;top:469.2px;border:3.2px solid transparent;border-left:4.4px solid #c5c5c5;border-right:0"></div>
    <svg style="left:29.6px;top:467.0px" width="14" height="12" viewBox="0 0 14 12"><path d="M.4 1.5C.4.9.9.5 1.4.5H4.7L6 2H11C11.6 2 12 2.4 12 3V9.2C12 9.8 11.6 10.2 11 10.2H1.4C.9 10.2.4 9.8.4 9.2Z" fill="#7cb342"/><rect x="6.8" y="5" width="5.8" height="5.8" rx="1" fill="#dcedc8"/><path d="M8.2 7.9H11.2M9.7 6.4V9.4" stroke="#558b2f" stroke-width=".9"/></svg>
    <div class="t fn" style="left:47.9px;top:465.8px">utils</div>
    <svg style="left:30.0px;top:485.4px" width="12" height="12" viewBox="0 0 12 12"><rect x=".2" y=".2" width="11.6" height="11.6" rx=".6" fill="#ffca28"/><text x="11.1" y="10.8" font-size="6.4" font-weight="bold" text-anchor="end" fill="#3a2e05" font-family="'Liberation Sans',sans-serif">JS</text></svg>
    <div class="t fn" style="left:47.9px;top:484.8px">app.js</div>
    <svg style="left:28.0px;top:504.5px" width="15" height="12" viewBox="0 0 15 12" fill="none" stroke="#f9a825" stroke-width="1.1" stroke-linecap="round"><path d="M4 .8C2.6.8 2.4 1.4 2.4 2.6V4.4C2.4 5.4 1.8 5.9.8 6C1.8 6.1 2.4 6.6 2.4 7.6V9.4C2.4 10.6 2.6 11.2 4 11.2"/><path d="M11 .8C12.4.8 12.6 1.4 12.6 2.6V4.4C12.6 5.4 13.2 5.9 14.2 6C13.2 6.1 12.6 6.6 12.6 7.6V9.4C12.6 10.6 12.4 11.2 11 11.2"/><path d="M5.4 8.2H5.5M7.5 8.2H7.6M9.6 8.2H9.7" stroke-width="1"/></svg>
    <div class="t fn" style="left:47.9px;top:503.9px">app.json</div>
    <svg style="left:30.6px;top:522.9px" width="11" height="13" viewBox="0 0 11 13" fill="none" stroke="#42a5f5" stroke-width="1.1" stroke-linejoin="round"><path d="M1 1.6C1 1 1.4.6 2 .6H6.2L10 4.4V11.4C10 12 9.6 12.4 9 12.4H2C1.4 12.4 1 12 1 11.4Z"/><path d="M6 .8V4.6H9.8"/></svg>
    <div class="t fn" style="left:47.9px;top:522.9px">app.json.bak</div>
    <svg style="left:29.2px;top:542.0px" width="13" height="13" viewBox="0 0 13 13"><path d="M2.2.8H12.4L10.8 10.6L6.4 12.4L1.6 10.6L1.9 8.2H4L3.9 9.2L6.4 10.2L9 9.2L9.4 6.8H1L1.4 4.8H9.8L10.1 2.8H1.8Z" fill="#42a5f5"/></svg>
    <div class="t fn" style="left:47.9px;top:542.0px">app.wxss</div>
    <svg style="left:28.0px;top:561.6px" width="15" height="12" viewBox="0 0 15 12" fill="none" stroke="#f9a825" stroke-width="1.1" stroke-linecap="round"><path d="M4 .8C2.6.8 2.4 1.4 2.4 2.6V4.4C2.4 5.4 1.8 5.9.8 6C1.8 6.1 2.4 6.6 2.4 7.6V9.4C2.4 10.6 2.6 11.2 4 11.2"/><path d="M11 .8C12.4.8 12.6 1.4 12.6 2.6V4.4C12.6 5.4 13.2 5.9 14.2 6C13.2 6.1 12.6 6.6 12.6 7.6V9.4C12.6 10.6 12.4 11.2 11 11.2"/><path d="M5.4 8.2H5.5M7.5 8.2H7.6M9.6 8.2H9.7" stroke-width="1"/></svg>
    <div class="t fn" style="left:47.9px;top:561.0px">cloudbaserc.json</div>
    <svg style="left:30.2px;top:582.6px" width="11" height="6.6" viewBox="0 0 13 8" fill="none" stroke="#42a5f5" stroke-width="1.5"><path d="M.8 7.2V1L3.4 4.2L6 1V7.2"/><path d="M10.4.6V6.2M8.4 4.2L10.4 6.6L12.4 4.2" stroke-linejoin="round"/></svg>
    <div class="t fn" style="left:47.9px;top:580.0px;font-size:11.4px;letter-spacing:-.3px;margin-top:.6px">CREATE_COLLECTIONS_...</div>
    <svg style="left:30.2px;top:601.7px" width="11" height="6.6" viewBox="0 0 13 8" fill="none" stroke="#42a5f5" stroke-width="1.5"><path d="M.8 7.2V1L3.4 4.2L6 1V7.2"/><path d="M10.4.6V6.2M8.4 4.2L10.4 6.6L12.4 4.2" stroke-linejoin="round"/></svg>
    <div class="t fn" style="left:47.9px;top:599.1px;font-size:11.4px;letter-spacing:-.3px;margin-top:.6px">DATABASE_INIT_GUIDE....</div>
    <svg style="left:30.2px;top:620.7px" width="11" height="6.6" viewBox="0 0 13 8" fill="none" stroke="#42a5f5" stroke-width="1.5"><path d="M.8 7.2V1L3.4 4.2L6 1V7.2"/><path d="M10.4.6V6.2M8.4 4.2L10.4 6.6L12.4 4.2" stroke-linejoin="round"/></svg>
    <div class="t fn" style="left:47.9px;top:618.1px;font-size:11.4px;letter-spacing:-.3px;margin-top:.6px">DATABASE_SETUP.md</div>
    <div class="abs" style="left:0;top:628.6px;width:189px;height:39px;background:#383838"></div>
    <svg style="left:5.8px;top:633.4px" width="6" height="10" viewBox="0 0 6 10" fill="none" stroke="#a4a4a4" stroke-width="1"><path d="M.8.8L5 5L.8 9.2"/></svg>
    <div class="t" style="left:17px;top:634.2px;font-size:9.5px;color:#dcdcdc;-webkit-text-stroke:.25px">大纲</div>
    <svg style="left:5.8px;top:652.4px" width="6" height="10" viewBox="0 0 6 10" fill="none" stroke="#a4a4a4" stroke-width="1"><path d="M.8.8L5 5L.8 9.2"/></svg>
    <div class="t" style="left:17px;top:653.6px;font-size:9.5px;color:#dcdcdc;-webkit-text-stroke:.25px">时间线</div>
  </div>
  <div id="ed">
    <div id="codeclip">
      <!-- tabs row -->
      <div class="abs" style="left:0;top:0;width:572px;height:25.4px;background:#383838"></div>
      <div class="abs" style="left:1px;top:0;width:103.7px;height:25.4px;background:#2d2d2d"></div>
      <svg style="left:11px;top:10px" width="11" height="11" viewBox="0 0 11 11"><rect width="10.8" height="10.8" rx=".6" fill="#ffca28"/><text x="10.2" y="9.9" font-size="6" font-weight="bold" text-anchor="end" fill="#3a2e05" font-family="'Liberation Sans',sans-serif">JS</text></svg>
      <div class="t" id="tabt" style="left:28.6px;top:9px;font-size:11.8px;font-style:italic;color:#fff;-webkit-text-stroke:.2px">index.js</div>
      <svg style="left:87.4px;top:9px" width="9" height="9" viewBox="0 0 9 9" fill="none" stroke="#e0e0e0" stroke-width="1"><path d="M.8.8L8 8M8 .8L.8 8"/></svg>
      <!-- editor actions -->
      <svg style="left:479.6px;top:6.6px" width="16" height="13" viewBox="0 0 16 13"><defs><linearGradient id="gCy" x1="0" y1="0" x2="0" y2="1"><stop offset="0" stop-color="#62e6dc"/><stop offset="1" stop-color="#1fb4ac"/></linearGradient><linearGradient id="gBl" x1="0" y1="0" x2="0" y2="1"><stop offset="0" stop-color="#3f8ff6"/><stop offset="1" stop-color="#1558e8"/></linearGradient></defs><path d="M4.9.4H8.6L4.6 4.1L8.6 7.4H4.9L.7 4.1Z" fill="url(#gCy)"/><path d="M7.2 4.1H10.9L14.6 7.6L10.9 11.5H7.2L10.9 7.6Z" fill="url(#gBl)"/></svg>
      <svg style="left:500.8px;top:6.2px" width="12" height="13.2" viewBox="0 0 13 14"><path d="M6.4.4L12.2 3.7V10.3L6.4 13.6L.6 10.3V3.7Z" fill="#d0d0d0"/><path d="M4 5.2L6 3.8H9.2L7.2 6.4H9.4L7.4 8.8L5.2 10.2L6.8 7.6H4.2L6.2 5.2Z" fill="#2d2d2d"/></svg>
      <svg style="left:523.8px;top:7px" width="11" height="11" viewBox="0 0 11 11" fill="none" stroke="#b4b4b4" stroke-width="1"><rect x=".5" y=".5" width="10" height="10" rx="1.2"/><path d="M5.5.5V10.5"/></svg>
      <svg style="left:546.4px;top:11.6px" width="11" height="3" viewBox="0 0 11 3" fill="#c8c8c8"><circle cx="1.2" cy="1.4" r=".95"/><circle cx="5.4" cy="1.4" r=".95"/><circle cx="9.6" cy="1.4" r=".95"/></svg>
      <!-- breadcrumb -->
      <div class="t bc" style="left:14.4px;top:30.4px;font-size:11.4px;color:#8a8a8a">pages</div>
      <svg style="left:51px;top:32.4px" width="5" height="8" viewBox="0 0 5 8" fill="none" stroke="#7a7a7a" stroke-width=".9"><path d="M.6.6L4 4L.6 7.4"/></svg>
      <div class="t bc" style="left:60.6px;top:30.4px;font-size:11.4px;color:#8a8a8a">index</div>
      <svg style="left:93px;top:32.4px" width="5" height="8" viewBox="0 0 5 8" fill="none" stroke="#7a7a7a" stroke-width=".9"><path d="M.6.6L4 4L.6 7.4"/></svg>
      <svg style="left:103.6px;top:31px" width="11" height="11" viewBox="0 0 11 11"><rect width="10.4" height="10.4" rx=".6" fill="#ffca28"/><text x="9.8" y="9.5" font-size="5.8" font-weight="bold" text-anchor="end" fill="#3a2e05" font-family="'Liberation Sans',sans-serif">JS</text></svg>
      <div class="t bc" style="left:121.4px;top:30.4px;font-size:11.4px;color:#c2c2c2">index.js</div>
      <svg style="left:165px;top:32.4px" width="5" height="8" viewBox="0 0 5 8" fill="none" stroke="#7a7a7a" stroke-width=".9"><path d="M.6.6L4 4L.6 7.4"/></svg>
      <div class="t bc" style="left:175px;top:30px;font-size:11.4px;color:#8a8a8a">...</div>
      <!-- scrollbar -->
      <div class="abs" style="left:559.4px;top:44.5px;width:1px;height:343px;background:#383838"></div>
      <div class="abs" style="left:560px;top:44.5px;width:12px;height:23px;background:#4e4e4e"></div>
      <div class="abs" style="left:148.8px;top:97.4px;width:8.4px;height:1.2px;background:repeating-linear-gradient(90deg,#9a9a9a 0,#9a9a9a 1.4px,transparent 1.4px,transparent 3.1px)"></div>
      <div class="abs" style="left:48.4px;top:44.5px;width:511.0px;height:27.6px;background:#484848"></div>
      <div class="t ln" style="left:2px;width:23.8px;top:44.5px;color:#c6c6c6">1</div>
      <div class="t cd" style="left:48.5px;top:44.5px"><span style="color:#70c677">// pages/index/index.js</span></div>
      <div class="t ln" style="left:2px;width:23.8px;top:72.1px;color:#5c5c5c">2</div>
      <div class="t cd" style="left:48.5px;top:72.1px"><span style="color:#f2da52">const</span> <span style="color:#5bc2f5">api</span> <span style="color:#f2da52">=</span> <span style="color:#e9e3a6">require</span><span style="color:#f5c400">(</span><span style="color:#62c0f2">'</span><span style="color:#f17f6a">../../utils/api</span><span style="color:#62c0f2">'</span><span style="color:#f5c400">)</span></div>
      <div class="t ln" style="left:2px;width:23.8px;top:99.7px;color:#5c5c5c">3</div>
      <div class="t cd" style="left:48.5px;top:99.7px"><span style="color:#f2da52">const</span> <span style="color:#d9a82e">{</span> <span style="color:#3f9bd8">showLoading, hideLoading, showError</span> <span style="color:#d9a82e">}</span> <span style="color:#f2da52">=</span> <span style="color:#e9e3a6">require</span></div>
      <div class="t cd" style="left:48.5px;top:127.4px"><span style="color:#f5c400">(</span><span style="color:#62c0f2">'</span><span style="color:#f17f6a">../../utils/util</span><span style="color:#62c0f2">'</span><span style="color:#f5c400">)</span></div>
      <div class="t ln" style="left:2px;width:23.8px;top:155.0px;color:#5c5c5c">4</div>
      <div class="t ln" style="left:2px;width:23.8px;top:182.6px;color:#5c5c5c">5</div>
      <div class="t cd" style="left:48.5px;top:182.6px"><span style="color:#e9e3a6">Page</span><span style="color:#f5c400">(</span><span style="color:#d670d6">{</span></div>
      <div class="t ln" style="left:2px;width:23.8px;top:210.2px;color:#5c5c5c">6</div>
      <div class="t cd" style="left:48.5px;top:210.2px">  <span style="color:#9cdcfe">data</span><span style="color:#9cdcfe">:</span> <span style="color:#2a9df4">{</span></div>
      <div class="t ln" style="left:2px;width:23.8px;top:237.8px;color:#5c5c5c">7</div>
      <div class="t cd" style="left:48.5px;top:237.8px">    <span style="color:#70c677">// 精选推荐卡片</span></div>
      <div class="t ln" style="left:2px;width:23.8px;top:265.5px;color:#5c5c5c">8</div>
      <div class="t cd" style="left:48.5px;top:265.5px">    <span style="color:#9cdcfe">recommendCards:</span> <span style="color:#f5c400">[</span></div>
      <div class="t ln" style="left:2px;width:23.8px;top:293.1px;color:#5c5c5c">9</div>
      <div class="t cd" style="left:48.5px;top:293.1px">      <span style="color:#d670d6">{</span> <span style="color:#9cdcfe">_id:</span> <span style="color:#62c0f2">'</span><span style="color:#f17f6a">r1</span><span style="color:#62c0f2">'</span><span style="color:#9cdcfe">,</span> <span style="color:#9cdcfe">name:</span> <span style="color:#62c0f2">'</span><span style="color:#f17f6a">新春大吉</span><span style="color:#62c0f2">'</span><span style="color:#9cdcfe">,</span> <span style="color:#9cdcfe">desc:</span> <span style="color:#62c0f2">'</span><span style="color:#f17f6a">恭喜发财，万事如意</span><span style="color:#62c0f2">'</span><span style="color:#9cdcfe">,</span></div>
      <div class="t cd" style="left:48.5px;top:320.7px">      <span style="color:#9cdcfe">icon:</span> <span style="color:#62c0f2">'</span><svg style="position:relative;display:inline-block;vertical-align:-2.4px;margin:0 2.4px 0 2.4px" width="9" height="14" viewBox="0 0 11.6 14" preserveAspectRatio="none"><rect width="11.6" height="14" rx=".5" fill="#f3182c"/><circle cx="6" cy="4.6" r="2.4" fill="#9a1a12"/><circle cx="6" cy="4.6" r="1" fill="#f0b93a"/></svg><span style="color:#62c0f2">'</span><span style="color:#9cdcfe">,</span> <span style="color:#9cdcfe">style:</span> <span style="color:#62c0f2">'</span><span style="color:#f17f6a">red</span><span style="color:#62c0f2">'</span> <span style="color:#d670d6">}</span><span style="color:#9cdcfe">,</span></div>
      <div class="t ln" style="left:2px;width:23.8px;top:348.3px;color:#5c5c5c">10</div>
      <div class="t cd" style="left:48.5px;top:348.3px">      <span style="color:#d670d6">{</span> <span style="color:#9cdcfe">_id:</span> <span style="color:#62c0f2">'</span><span style="color:#f17f6a">r2</span><span style="color:#62c0f2">'</span><span style="color:#9cdcfe">,</span> <span style="color:#9cdcfe">name:</span> <span style="color:#62c0f2">'</span><span style="color:#f17f6a">新年快乐</span><span style="color:#62c0f2">'</span><span style="color:#9cdcfe">,</span> <span style="color:#9cdcfe">desc:</span> <span style="color:#62c0f2">'</span><span style="color:#f17f6a">辞旧迎新，鸿运当头</span><span style="color:#62c0f2">'</span><span style="color:#9cdcfe">,</span></div>
      <div class="t cd" style="left:48.5px;top:375.9px">      <span style="color:#9cdcfe">icon:</span> <span style="color:#62c0f2">'</span><svg style="position:relative;display:inline-block;vertical-align:-2.4px;margin:0" width="13.8" height="13.8" viewBox="0 0 14 14"><rect width="14" height="14" fill="#e8e4de"/><rect x="1" y="1" width="12" height="12" fill="#1b1a3c"/><circle cx="7" cy="6.6" r="3.4" fill="#d848c0"/><circle cx="7" cy="6.6" r="1.4" fill="#fff"/></svg><span style="color:#62c0f2">'</span><span style="color:#9cdcfe">,</span> <span style="color:#9cdcfe">style:</span> <span style="color:#62c0f2">'</span><span style="color:#f17f6a">gold</span><span style="color:#62c0f2">'</span> <span style="color:#d670d6">}</span><span style="color:#9cdcfe">,</span></div>
      <svg style="left:33.5px;top:194.2px" width="9" height="6" viewBox="0 0 9 6" fill="none" stroke="#c5c5c5" stroke-width="1"><path d="M.4.6L4.5 4.8L8.6.6"/></svg>
      <svg style="left:33.5px;top:221.8px" width="9" height="6" viewBox="0 0 9 6" fill="none" stroke="#c5c5c5" stroke-width="1"><path d="M.4.6L4.5 4.8L8.6.6"/></svg>
      <svg style="left:33.5px;top:277.1px" width="9" height="6" viewBox="0 0 9 6" fill="none" stroke="#c5c5c5" stroke-width="1"><path d="M.4.6L4.5 4.8L8.6.6"/></svg>
      <div class="abs" style="left:48.6px;top:210.2px;width:1px;height:177.3px;background:#505050"></div>
      <div class="abs" style="left:65.2px;top:237.8px;width:1px;height:149.7px;background:#404040"></div>
      <div class="abs" style="left:81.8px;top:293.1px;width:1px;height:94.4px;background:#404040"></div>
    </div>
    <!-- panel -->
    <div class="abs" style="left:1px;top:393.8px;width:571px;height:1px;background:#3e3e3e"></div>
    <div class="pt" style="left:18px">构建</div>
    <div class="pt" style="left:57.8px;color:#e8e8e8;font-weight:bold">调试器</div>
    <div class="abs" style="left:56.4px;top:419.2px;width:31.6px;height:1px;background:#d0d0d0"></div>
    <div class="pt" style="left:107.4px">问题</div>
    <div class="pt" style="left:147.2px">输出</div>
    <div class="pt" style="left:186.6px">调试控制台</div>
    <div class="pt" style="left:255px">终端</div>
    <div class="pt" style="left:294.4px">代码质量</div>
    <svg style="left:525.2px;top:406.8px" width="8.6" height="5.2" viewBox="0 0 10 6" fill="none" stroke="#bcbcbc" stroke-width="1.15"><path d="M.6 5.4L5 1L9.4 5.4"/></svg>
    <svg style="left:547.4px;top:405.8px" width="8" height="8" viewBox="0 0 9 9" fill="none" stroke="#bcbcbc" stroke-width="1.1"><path d="M.6.6L8.2 8.2M8.2.6L.6 8.2"/></svg>
    <!-- devtools tabs -->
    <div class="abs" style="left:1px;top:424px;width:571px;height:22.5px;background:#333"></div>
    <div class="abs" style="left:1px;top:446.5px;width:571px;height:23.6px;background:#333;border-top:1px solid #434343;border-bottom:1px solid #4a4a4a"></div>
    <div class="abs" style="left:82.8px;top:424px;width:59.2px;height:22.2px;background:#000"></div>
    <svg style="left:9.4px;top:429.6px" width="13" height="13" viewBox="0 0 13 13" fill="none" stroke="#a8a8a8" stroke-width="1"><path d="M4.4 9.6H1.4C1 9.6.6 9.2.6 8.8V1.4C.6 1 1 .6 1.4.6H9.8C10.2.6 10.6 1 10.6 1.4V3.8" stroke-dasharray="none"/><path d="M5.6 5L12 7.6L9.2 8.6L11.4 11.6L10.2 12.4L8 9.4L6.2 11.4Z" fill="#a8a8a8" stroke="none"/></svg>
    <div class="abs" style="left:29.8px;top:428.6px;width:1px;height:13.6px;background:#4a4a4a"></div>
    <div class="dt" style="left:46.6px">Wxml</div>
    <div class="dt" style="left:93px;color:#fff">Console</div>
    <div class="dt" style="left:152px">Sources</div>
    <div class="dt" style="left:210.6px">Network</div>
    <div class="dt" style="left:270.2px">Performance</div>
    <div class="dt" style="left:350.6px">Memory</div>
    <div class="dt" style="left:409.4px">AppData</div>
    <div class="dt" style="left:467.6px;font-size:12.6px;top:427.6px">»</div>
    <div class="abs" style="left:493px;top:428.6px;width:1px;height:13.6px;background:#4a4a4a"></div>
    <svg class="gear" style="left:503.4px;top:429.2px" width="13" height="13" viewBox="0 0 13 13"><path d="M5.4.4H7.6L7.9 2.1L9.2 2.8L10.8 2.1L12.3 3.9L11.2 5.3V6.9L12.6 8L11.4 10L9.8 9.6L8.6 10.5L8.2 12.6H5.8L5.2 10.8L3.8 10.1L2.2 10.8L.7 9L1.8 7.6V6L.4 4.9L1.6 2.9L3.2 3.3L4.6 2.3Z" fill="#bdbdbd"/><circle cx="6.5" cy="6.5" r="2" fill="#333"/></svg>
    <svg style="left:533px;top:429.4px" width="3" height="12" viewBox="0 0 3 12" fill="#bdbdbd"><circle cx="1.5" cy="1.6" r="1.15"/><circle cx="1.5" cy="6" r="1.15"/><circle cx="1.5" cy="10.4" r="1.15"/></svg>
    <svg style="left:552.6px;top:429.8px" width="13" height="12" viewBox="0 0 13 12" fill="none" stroke="#9a9a9a" stroke-width="1.3"><rect x="3.8" y=".8" width="8.4" height="6.8"/><path d="M3.4 3.8H.8V11H9.4V8"/></svg>
    <!-- console toolbar -->
    <svg style="left:8px;top:452.8px" width="13" height="12" viewBox="0 0 13 12" fill="none" stroke="#a4a4a4" stroke-width="1"><rect x=".6" y=".6" width="11.6" height="10.6" rx=".6"/><path d="M3.6.6V11.2"/><path d="M6 3.6L9.2 5.9L6 8.2Z" fill="#a4a4a4" stroke="none"/></svg>
    <div class="abs" style="left:28.6px;top:448.6px;width:20.6px;height:20.4px;border-radius:2px;background:#444"></div>
    <svg style="left:32.6px;top:452.4px" width="13" height="13" viewBox="0 0 13 13" fill="none" stroke="#acacac" stroke-width="1.4"><circle cx="6.4" cy="6.4" r="5.4"/><path d="M2.6 2.8L10.2 10.2"/></svg>
    <div class="abs" style="left:54.6px;top:451.6px;width:1px;height:14px;background:#4a4a4a"></div>
    <div class="dt" style="left:63.2px;top:454.4px">top</div>
    <div class="abs" style="left:166.8px;top:456.6px;border:3px solid transparent;border-top:5px solid #a8a8a8;border-bottom:0"></div>
    <div class="abs" style="left:181.8px;top:451.6px;width:1px;height:14px;background:#4a4a4a"></div>
    <svg style="left:190.4px;top:453.4px" width="15" height="11" viewBox="0 0 15 11"><path d="M.4 5.5C2.2 2 4.6.6 7.5.6S12.8 2 14.6 5.5C12.8 9 10.4 10.4 7.5 10.4S2.2 9 .4 5.5Z" fill="#a4a4a4"/><circle cx="7.5" cy="5.5" r="3" fill="#333"/><circle cx="7.5" cy="5.5" r="1.6" fill="#a4a4a4"/></svg>
    <div class="abs" style="left:213.6px;top:451.6px;width:1px;height:14px;background:#4a4a4a"></div>
    <div class="abs" style="left:219.4px;top:450.8px;width:130.2px;height:16.8px;background:#262626;border:1px solid #5e5e5e"></div>
    <div class="dt" style="left:224.2px;top:454.6px;color:#d0d0d0">Filter</div>
    <div class="dt" style="left:357.6px;top:454.2px">Default levels</div>
    <div class="abs" style="left:423px;top:456.4px;border:3.4px solid transparent;border-top:5.4px solid #a0a0a0;border-bottom:0"></div>
    <div class="abs" style="left:541.6px;top:451.6px;width:1px;height:14px;background:#4a4a4a"></div>
    <svg style="left:551.6px;top:452.2px" width="13" height="13" viewBox="0 0 13 13"><path d="M5.4.4H7.6L7.9 2.1L9.2 2.8L10.8 2.1L12.3 3.9L11.2 5.3V6.9L12.6 8L11.4 10L9.8 9.6L8.6 10.5L8.2 12.6H5.8L5.2 10.8L3.8 10.1L2.2 10.8L.7 9L1.8 7.6V6L.4 4.9L1.6 2.9L3.2 3.3L4.6 2.3Z" fill="#bdbdbd"/><circle cx="6.5" cy="6.5" r="2" fill="#333"/></svg>
    <!-- console body -->
    <div class="abs" style="left:1px;top:471px;width:571px;height:196px;background:#242424"></div>
    <svg style="left:8.4px;top:475.6px" width="6" height="8" viewBox="0 0 6 8" fill="none" stroke="#3b82f6" stroke-width="1.3"><path d="M1 .8L4.6 4L1 7.2"/></svg>
  </div>
  <div id="status">
    <svg style="left:12.8px;top:6.6px" width="11" height="11" viewBox="0 0 11 11" fill="none" stroke="#c4c4c4" stroke-width=".9"><circle cx="5.5" cy="5.5" r="4.9"/><path d="M3.5 3.5L7.5 7.5M7.5 3.5L3.5 7.5"/></svg>
    <div class="t" style="left:28px;top:7.2px;font-size:11px;color:#c8c8c8">0</div>
    <svg style="left:37.4px;top:6.6px" width="12" height="11" viewBox="0 0 12 11" fill="none" stroke="#c4c4c4" stroke-width=".9" stroke-linejoin="round"><path d="M6 .8L11.4 10.2H.6Z"/><path d="M6 4V7M6 8.2V9"/></svg>
    <div class="t" style="left:53.6px;top:7.2px;font-size:11px;color:#c8c8c8">0</div>
    <div class="sb" style="left:473.6px">行 1，列 1</div>
    <div class="sb" style="left:537px">空格: 2</div>
    <div class="sb" style="left:584.6px">LF</div>
    <div class="sb" style="left:609.6px">UTF-8</div>
    <div class="sb" style="left:654.2px;letter-spacing:2.4px;color:#aaa">{}</div>
    <div class="sb" style="left:670.8px">JavaScript</div>
    <svg style="left:736.2px;top:6.6px" width="10" height="12" viewBox="0 0 11 12"><path d="M5.5.4L10.4 3.2V8.8L5.5 11.6L.6 8.8V3.2Z" fill="#a8a8a8"/><path d="M3.4 4.6L5.2 3.4H8L6.2 5.6H8.2L6.4 7.6L4.4 8.8L5.8 6.6H3.6L5.4 4.6Z" fill="#383838"/></svg>
  </div>
  <div id="vsep"></div>
  <div class="abs" style="left:508px;top:53px;width:1px;height:667px;background:#292929"></div>
  <div class="abs" style="left:0;top:0;width:1080px;height:744px;border-radius:10px;box-shadow:inset 1px 0 0 rgba(255,255,255,.13),inset -1px 0 0 rgba(255,255,255,.13),inset 0 -1px 0 rgba(255,255,255,.13),inset 0 1px 0 #1f1f1f;pointer-events:none"></div>
</div>
</body>
</html>
